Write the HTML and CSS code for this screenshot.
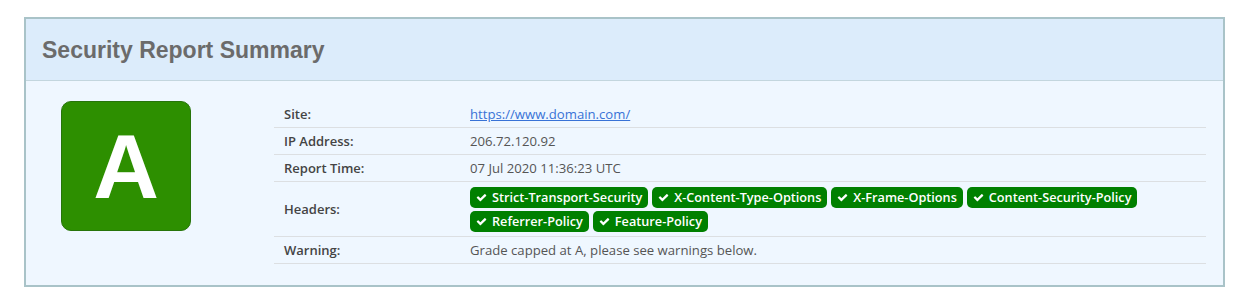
FILE: index.html
```html
<!DOCTYPE html>
<html>
<head>
<meta charset="utf-8">
<link rel="stylesheet" href="styles.css">
</head>
<body>
<div class="panel">
  <div class="panel-head"><h2 class="title">Security Report Summary</h2></div>
  <div class="panel-body">
    <div class="grade-col"><div class="grade">A</div></div>
    <table class="report">
      <tr><th>Site:</th><td><a href="#" class="link">https://www.domain.com/</a></td></tr>
      <tr><th>IP Address:</th><td>206.72.120.92</td></tr>
      <tr><th>Report Time:</th><td>07 Jul 2020 11:36:23 UTC</td></tr>
      <tr class="headers-row"><th>Headers:</th><td>
        <div class="badges">
          <span class="badge"><svg class="chk" viewBox="0 0 1792 1792"><path d="M1671 566q0 40-28 68l-724 724-136 136q-28 28-68 28t-68-28l-136-136-362-362q-28-28-28-68t28-68l136-136q28-28 68-28t68 28l294 295 656-657q28-28 68-28t68 28l136 136q28 28 28 68z"/></svg>Strict-Transport-Security</span>
          <span class="badge"><svg class="chk" viewBox="0 0 1792 1792"><path d="M1671 566q0 40-28 68l-724 724-136 136q-28 28-68 28t-68-28l-136-136-362-362q-28-28-28-68t28-68l136-136q28-28 68-28t68 28l294 295 656-657q28-28 68-28t68 28l136 136q28 28 28 68z"/></svg>X-Content-Type-Options</span>
          <span class="badge"><svg class="chk" viewBox="0 0 1792 1792"><path d="M1671 566q0 40-28 68l-724 724-136 136q-28 28-68 28t-68-28l-136-136-362-362q-28-28-28-68t28-68l136-136q28-28 68-28t68 28l294 295 656-657q28-28 68-28t68 28l136 136q28 28 28 68z"/></svg>X-Frame-Options</span>
          <span class="badge"><svg class="chk" viewBox="0 0 1792 1792"><path d="M1671 566q0 40-28 68l-724 724-136 136q-28 28-68 28t-68-28l-136-136-362-362q-28-28-28-68t28-68l136-136q28-28 68-28t68 28l294 295 656-657q28-28 68-28t68 28l136 136q28 28 28 68z"/></svg>Content-Security-Policy</span>
          <span class="badge"><svg class="chk" viewBox="0 0 1792 1792"><path d="M1671 566q0 40-28 68l-724 724-136 136q-28 28-68 28t-68-28l-136-136-362-362q-28-28-28-68t28-68l136-136q28-28 68-28t68 28l294 295 656-657q28-28 68-28t68 28l136 136q28 28 28 68z"/></svg>Referrer-Policy</span>
          <span class="badge"><svg class="chk" viewBox="0 0 1792 1792"><path d="M1671 566q0 40-28 68l-724 724-136 136q-28 28-68 28t-68-28l-136-136-362-362q-28-28-28-68t28-68l136-136q28-28 68-28t68 28l294 295 656-657q28-28 68-28t68 28l136 136q28 28 28 68z"/></svg>Feature-Policy</span>
        </div>
      </td></tr>
      <tr><th>Warning:</th><td>Grade capped at A, please see warnings below.</td></tr>
    </table>
  </div>
</div>
</body>
</html>
```

FILE: styles.css
```css
html, body {
  margin: 0;
  padding: 0;
  background: #ffffff;
}
body {
  padding: 17px 15px 0 24px;
  font-family: "Open Sans", "Noto Sans", sans-serif;
}
.panel {
  border: 2px solid #a9c3c8;
  background: #eff7ff;
}
.panel-head {
  background: #dcecfb;
  border-bottom: 1px solid #c3d6de;
  height: 61px;
  display: flex;
  align-items: center;
  padding-left: 16px;
}
.title {
  margin: 0;
  padding-top: 2px;
  font-family: "Liberation Sans", Arial, sans-serif;
  font-weight: bold;
  font-size: 23px;
  color: #6b6b6b;
}
.panel-body {
  display: flex;
  padding: 20px 17px 21px 0;
}
.grade-col {
  width: 248px;
  flex: none;
  padding-left: 35px;
  box-sizing: border-box;
}
.grade {
  width: 128px;
  height: 128px;
  border: 1px solid #27740a;
  background: #2d8f00;
  border-radius: 10px;
  color: #ffffff;
  font-family: "Liberation Sans", Arial, sans-serif;
  font-weight: bold;
  font-size: 91px;
  display: flex;
  align-items: center;
  justify-content: center;
  line-height: 1;
}
.report {
  flex: 1;
  border-collapse: collapse;
  font-size: 13px;
  line-height: 17px;
}
.report th, .report td {
  border-bottom: 1px solid #dcdfe2;
  padding: 5px 10px 4px 10px;
  vertical-align: middle;
  text-align: left;
}
.report th {
  width: 166px;
  font-weight: 600;
  color: #444444;
}
.report td {
  color: #555555;
  font-size: 13.15px;
}
.link {
  color: #3872d6;
  text-decoration: underline;
}
.badges {
  display: flex;
  flex-wrap: wrap;
  gap: 3px 4px;
}
.badge {
  display: inline-flex;
  align-items: center;
  height: 21px;
  padding: 0 6px 0 6px;
  background: #008000;
  color: #ffffff;
  border-radius: 5px;
  font-weight: 600;
  font-size: 12.7px;
  white-space: nowrap;
}
.chk {
  width: 11px;
  height: 11px;
  fill: #ffffff;
  margin-right: 5px;
}
```
